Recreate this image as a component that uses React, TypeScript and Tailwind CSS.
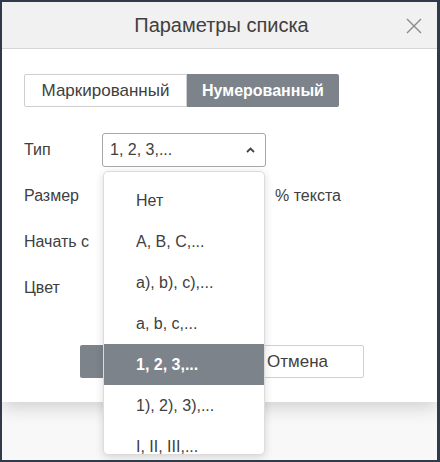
const items = ["Нет", "A, B, C,...", "a), b), c),...", "a, b, c,...", "1, 2, 3,...", "1), 2), 3),...", "I, II, III,..."];

export default function App() {
  return (
    <div className="w-[440px] h-[462px] bg-[#2f3b4a] pt-[2px] pl-[2px] pr-[3px] pb-[2px] font-['Liberation_Sans',Arial,sans-serif]">
      <div className="relative h-full bg-[#f8f8f8] text-[#404040] overflow-hidden">
        <div className="bg-white shadow-[0_4px_18px_rgba(0,0,0,0.18)]">
          <div className="h-[47px] bg-[#f1f1f1] border-b border-[#d6d6d6] flex items-center justify-center relative">
            <span className="text-[20px] ml-[4px]">Параметры списка</span>
            <svg className="absolute right-[14px] top-[15px]" width="18" height="18" viewBox="0 0 18 18">
              <path d="M2 2 L16 16 M16 2 L2 16" stroke="#8a8a8a" strokeWidth="1.4" fill="none" />
            </svg>
          </div>

          <div className="px-[22px] pt-[25px] pb-[24px]">
            <div className="flex h-[33px]">
              <div className="w-[163px] flex items-center justify-center border border-[#cfcfcf] bg-white rounded-l-[2px] text-[17px]">Маркированный</div>
              <div className="w-[152px] flex items-center justify-center bg-[#7c838b] text-white font-bold rounded-r-[2px] text-[16px]">Нумерованный</div>
            </div>

            <div className="mt-[26px] flex flex-col gap-[12px] text-[16px]">
              <div className="flex items-center h-[34px]">
                <span className="w-[78px]">Тип</span>
                <div className="w-[164px] h-[34px] border border-[#a8a8a8] rounded-[3px] flex items-center justify-between pl-[7px] pr-[10px] bg-white">
                  <span>1, 2, 3,...</span>
                  <svg width="9" height="6" viewBox="0 0 9 6">
                    <path d="M1 5 L4.5 1.5 L8 5" stroke="#444" strokeWidth="1.8" fill="none" />
                  </svg>
                </div>
              </div>
              <div className="flex items-center h-[34px]">
                <span className="w-[79px]">Размер</span>
                <div className="w-[162px] h-[34px] bg-white" />
                <span className="ml-[10px]">% текста</span>
              </div>
              <div className="flex items-center h-[34px]">
                <span className="w-[79px]">Начать с</span>
                <div className="w-[162px] h-[34px] bg-white" />
              </div>
              <div className="flex items-center h-[34px]">
                <span className="w-[78px]">Цвет</span>
              </div>
            </div>

            <div className="mt-[40px] flex justify-center gap-[20px] text-[17px] ml-[4px]">
              <div className="w-[132px] h-[33px] bg-[#7c838b] text-white font-bold flex items-center justify-center rounded-[2px]">OK</div>
              <div className="w-[132px] h-[33px] border border-[#d0d0d0] bg-white flex items-center justify-center rounded-[2px]">Отмена</div>
            </div>
          </div>
        </div>

        <div className="absolute left-[101px] top-[169px] w-[162px] h-[284px] bg-white border border-[#dcdcdc] rounded-[5px] shadow-[0_2px_8px_rgba(0,0,0,0.15)] overflow-hidden pt-[8px] text-[16px]">
          {items.map((it, i) => (
            <div
              key={it}
              className={i === 4 ? "h-[41px] flex items-center pl-[32px] bg-[#7c838b] text-white font-bold" : "h-[41px] flex items-center pl-[32px]"}
            >
              {it}
            </div>
          ))}
        </div>
      </div>
    </div>
  );
}
